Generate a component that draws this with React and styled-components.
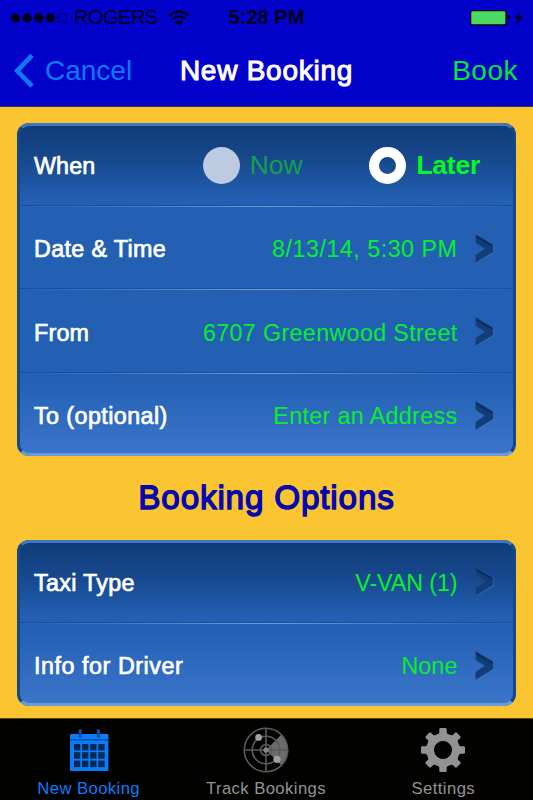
import React, { useState } from 'react'
import styled, { createGlobalStyle } from 'styled-components'

const trip = [
    { label: 'Date & Time', value: '8/13/14, 5:30 PM', spacing: 0.5, labelSpacing: 0.35 },
    { label: 'From', value: '6707 Greenwood Street', spacing: 0.34, labelSpacing: 0.2 },
    { label: 'To (optional)', value: 'Enter an Address', spacing: 0.34, labelSpacing: 0.42 },
]

const options = [
    { label: 'Taxi Type', value: 'V-VAN (1)', spacing: -0.1, labelSpacing: 0.3 },
    { label: 'Info for Driver', value: 'None', spacing: 0.1, labelSpacing: 0.55 },
]

function ArrowIcon() {
    return (
        <svg width="22" height="34" viewBox="0 0 22 34">
            <path d="M2 2 L20.2 12.8 V21 L2 31.6 V24.4 L11.6 17.8 L2 11.6 Z" fill="#4f82cc" opacity="0.4" />
            <path d="M1.8 2.4 L19 12.6 V20 L1.8 30.4 V23 L10.8 16.8 L1.8 10.8 Z" fill="#133d78" stroke="#1d4b8c" strokeWidth="0.7" />
            <path d="M2.2 3.2 L18.4 13 V14.8 L2.2 5.8 Z" fill="#0c2c5e" />
        </svg>
    )
}

function CalendarIcon() {
    return (
        <svg width="40" height="44" viewBox="0 1 40 44">
            <rect x="1" y="6" width="38.4" height="37" rx="1" fill="#0a7bfb" />
            <rect x="1" y="11" width="38.4" height="1.6" fill="#07509f" />
            <rect x="9.6" y="1.2" width="3.2" height="8.4" rx="1" fill="#07509f" />
            <rect x="27.8" y="1.2" width="3.2" height="8.4" rx="1" fill="#07509f" />
            {[16, 24.2, 32.6].map((y) =>
                [5, 13.1, 21.2, 29.3].map((x) => (
                    <rect key={`${x}-${y}`} x={x} y={y} width="6.3" height="6.5" fill="#03284f" />
                ))
            )}
        </svg>
    )
}

function RadarIcon() {
    return (
        <svg width="46" height="46" viewBox="0 0 46 46">
            <path d="M23 23 L38.2 7.8 A21.5 21.5 0 0 1 38.2 38.2 Z" fill="#6b6b6b" />
            <g fill="none" stroke="#5a5a5a" strokeWidth="1.6">
                <circle cx="23" cy="23" r="21.7" />
                <circle cx="23" cy="23" r="13.8" />
                <circle cx="23" cy="23" r="5.5" />
                <path d="M23 1.5 V44.5 M1.5 23 H44.5" />
            </g>
            <circle cx="23" cy="23" r="2.6" fill="#858585" />
            <circle cx="15.6" cy="10.4" r="3.4" fill="#a0a0a0" />
            <circle cx="34" cy="32.3" r="3.6" fill="#a0a0a0" />
        </svg>
    )
}

function GearIcon() {
    return (
        <svg width="46" height="46" viewBox="-23 -23 46 46" fill="#929292">
            <path d="M0 -16.8 A16.8 16.8 0 1 1 -0.01 -16.8 Z M0 -9 A9 9 0 1 0 0.01 -9 Z" fillRule="evenodd" />
            {[0, 45, 90, 135, 180, 225, 270, 315].map((a) => (
                <path key={a} d="M-5.4 -14.5 L-3.7 -17.5 V-20.8 Q-3.7 -22 -2.4 -22 H2.4 Q3.7 -22 3.7 -20.8 V-17.5 L5.4 -14.5 Z" transform={`rotate(${a})`} />
            ))}
        </svg>
    )
}

function App() {
    const [when, setWhen] = useState('later')

    return (
        <Screen>
            <GlobalStyle />
            <Header>
                <StatusBar>
                    <Carrier>
                        <svg width="60" height="12" viewBox="0 0 60 12">
                            {[5.5, 17.2, 28.9, 40.4].map((x) => (
                                <circle key={x} cx={x} cy="6" r="4.7" fill="#00001c" />
                            ))}
                            <circle cx="52.1" cy="6" r="4.3" fill="none" stroke="#00003c" strokeWidth="0.9" />
                        </svg>
                        <span>ROGERS</span>
                        <svg width="22" height="16" viewBox="0 0 22 16">
                            <g fill="none" stroke="#00001c" strokeWidth="2.5">
                                <path d="M1.5 5.6 A13.6 13.6 0 0 1 20.5 5.6" />
                                <path d="M4.8 9 A9 9 0 0 1 17.2 9" />
                            </g>
                            <path d="M11 15.4 L7.2 11.7 A5.4 5.4 0 0 1 14.8 11.7 Z" fill="#00001c" />
                        </svg>
                    </Carrier>
                    <Clock>5:28 PM</Clock>
                    <Power>
                        <svg width="56" height="18" viewBox="0 0 56 18">
                            <rect x="1.6" y="1.6" width="35.4" height="14.4" rx="2" fill="#4cd964" stroke="#00001c" strokeWidth="1.3" />
                            <path d="M38.6 6 Q41.4 6.4 41.4 8.9 Q41.4 11.4 38.6 11.8 Z" fill="#00001c" />
                            <path d="M51.6 2.2 L45.4 9.8 H48.8 L47 15.8 L54 7.6 H50.4 Z" fill="#00001c" />
                        </svg>
                    </Power>
                </StatusBar>
                <NavBar>
                    <BackButton>
                        <svg width="22" height="36" viewBox="0 0 22 36">
                            <path d="M19 2.4 L4.2 17.8 L19 33.2" fill="none" stroke="#0a7aff" strokeWidth="4.6" />
                        </svg>
                        Cancel
                    </BackButton>
                    <Title>New Booking</Title>
                    <BookButton>Book</BookButton>
                </NavBar>
            </Header>

            <Content>
                <Card>
                    <Row>
                        <Label $spacing={0.1}>When</Label>
                        <Choices>
                            <Choice $on={when === 'now'} onClick={() => setWhen('now')}>
                                <Radio $on={when === 'now'} />
                                <span>Now</span>
                            </Choice>
                            <Choice $on={when === 'later'} onClick={() => setWhen('later')}>
                                <Radio $on={when === 'later'} />
                                <span>Later</span>
                            </Choice>
                        </Choices>
                    </Row>
                    {trip.map((item) => (
                        <Row key={item.label}>
                            <Label $spacing={item.labelSpacing}>{item.label}</Label>
                            <Value $spacing={item.spacing}>{item.value}</Value>
                            <ArrowIcon />
                        </Row>
                    ))}
                </Card>

                <Heading>Booking Options</Heading>

                <Card>
                    {options.map((item) => (
                        <Row key={item.label}>
                            <Label $spacing={item.labelSpacing}>{item.label}</Label>
                            <Value $spacing={item.spacing}>{item.value}</Value>
                            <ArrowIcon />
                        </Row>
                    ))}
                </Card>
            </Content>

            <TabBar>
                <Tab $active>
                    <CalendarIcon />
                    <span>New Booking</span>
                </Tab>
                <Tab>
                    <RadarIcon />
                    <span>Track Bookings</span>
                </Tab>
                <Tab>
                    <GearIcon />
                    <span>Settings</span>
                </Tab>
            </TabBar>
        </Screen>
    )
}

export default App

const GlobalStyle = createGlobalStyle`
    * {
        box-sizing: border-box;
    }
    body {
        margin: 0;
        overflow: hidden;
    }
    button {
        font: inherit;
        border: none;
        background: none;
        padding: 0;
        cursor: pointer;
    }
    svg {
        display: block;
        flex: none;
    }
`

const Screen = styled.div`
    width: 533px;
    height: 800px;
    display: flex;
    flex-direction: column;
    background: #fac530;
    font-family: "Liberation Sans", Arial, sans-serif;
    white-space: nowrap;
`

const Header = styled.header`
    height: 107px;
    background: #0202ca;
    border-bottom: 1px solid #33305e;
`

const StatusBar = styled.div`
    height: 35px;
    display: grid;
    grid-template-columns: 1fr auto 1fr;
    align-items: center;
    padding: 0 8px 0 10px;
    font-size: 20px;
    color: #00001c;
`

const Carrier = styled.div`
    display: flex;
    align-items: center;
    span {
        margin: 0 10px 0 4px;
        letter-spacing: -0.5px;
    }
`

const Clock = styled.div`
    margin-right: 2px;
    font-weight: bold;
`

const Power = styled.div`
    display: flex;
    justify-content: flex-end;
`

const NavBar = styled.div`
    height: 71px;
    display: grid;
    grid-template-columns: 1fr auto 1fr;
    align-items: center;
    padding: 0 15px 0 13px;
    font-size: 28px;
`

const BackButton = styled.button`
    display: flex;
    align-items: center;
    gap: 10px;
    color: #0a7aff;
`

const Title = styled.h1`
    margin: 0 0 0 2px;
    font-size: 28px;
    font-weight: normal;
    letter-spacing: 0.75px;
    color: white;
    -webkit-text-stroke: 1px white;
`

const BookButton = styled.button`
    justify-self: end;
    letter-spacing: 0.5px;
    color: #04e834;
`

const Content = styled.main`
    flex: 1;
    padding: 16px 17px 0;
`

const Card = styled.section`
    position: relative;
    border-radius: 12px;
    overflow: hidden;
    background:
        linear-gradient(#0f3a76, #184a90 40px, rgba(35, 96, 180, 0) 78px),
        linear-gradient(to top, #3c76ca, rgba(35, 96, 180, 0) 76px),
        #2360b4;
    &::after {
        content: "";
        position: absolute;
        inset: 0;
        border: 3px solid;
        border-color: #3f78c2 #12488f #6c99dc #164a86;
        border-radius: 12px;
        pointer-events: none;
    }
`

const Row = styled.div`
    height: 83.5px;
    display: flex;
    align-items: center;
    padding: 2px 20px 0 17px;
    &:first-child {
        height: 82.8px;
    }
    & + & {
        background:
            linear-gradient(to right, transparent, rgba(190, 215, 250, 0.5) 50%, transparent) 0 0 / 100% 1px no-repeat;
        box-shadow: 0 -1px 0 rgba(10, 50, 120, 0.35);
    }
`

const Label = styled.div`
    flex: 1;
    padding-top: 2.5px;
    font-size: 23.3px;
    letter-spacing: ${(p) => p.$spacing}px;
    color: white;
    -webkit-text-stroke: 0.7px white;
`

const Value = styled.div`
    margin-right: 16.5px;
    padding-top: 2.5px;
    font-size: 23.3px;
    letter-spacing: ${(p) => p.$spacing}px;
    color: #08ef2c;
`

const Choices = styled.div`
    display: flex;
    gap: 67px;
    margin-right: 16px;
`

const Choice = styled.button`
    display: flex;
    align-items: center;
    gap: 10px;
    font-size: 26.4px;
    line-height: 28px;
    font-weight: ${(p) => (p.$on ? 'bold' : 'normal')};
    letter-spacing: ${(p) => (p.$on ? '-0.2px' : '0')};
    color: ${(p) => (p.$on ? '#02fb1c' : '#14a04e')};
`

const Radio = styled.span`
    width: 37px;
    height: 37px;
    border-radius: 50%;
    border: ${(p) => (p.$on ? '10.5px solid white' : 'none')};
    background: ${(p) => (p.$on ? 'transparent' : '#bccae2')};
`

const Heading = styled.h2`
    margin: 0;
    height: 83.7px;
    line-height: 84px;
    text-align: center;
    font-size: 33.3px;
    font-weight: normal;
    letter-spacing: 0.8px;
    color: #0606b4;
    -webkit-text-stroke: 1.3px #0606b4;
    text-shadow: 0 -1px 0 #06062c;
`

const TabBar = styled.nav`
    height: 82px;
    display: flex;
    padding-right: 1px;
    background: #020201;
    border-top: 1px solid #5a4715;
`

const Tab = styled.div`
    flex: 1;
    display: flex;
    flex-direction: column;
    align-items: center;
    justify-content: flex-end;
    font-size: 16.7px;
    letter-spacing: 0.4px;
    color: ${(p) => (p.$active ? '#0a7bfb' : '#929292')};
    span {
        line-height: 20px;
        margin: 6px 0 1px;
    }
`
